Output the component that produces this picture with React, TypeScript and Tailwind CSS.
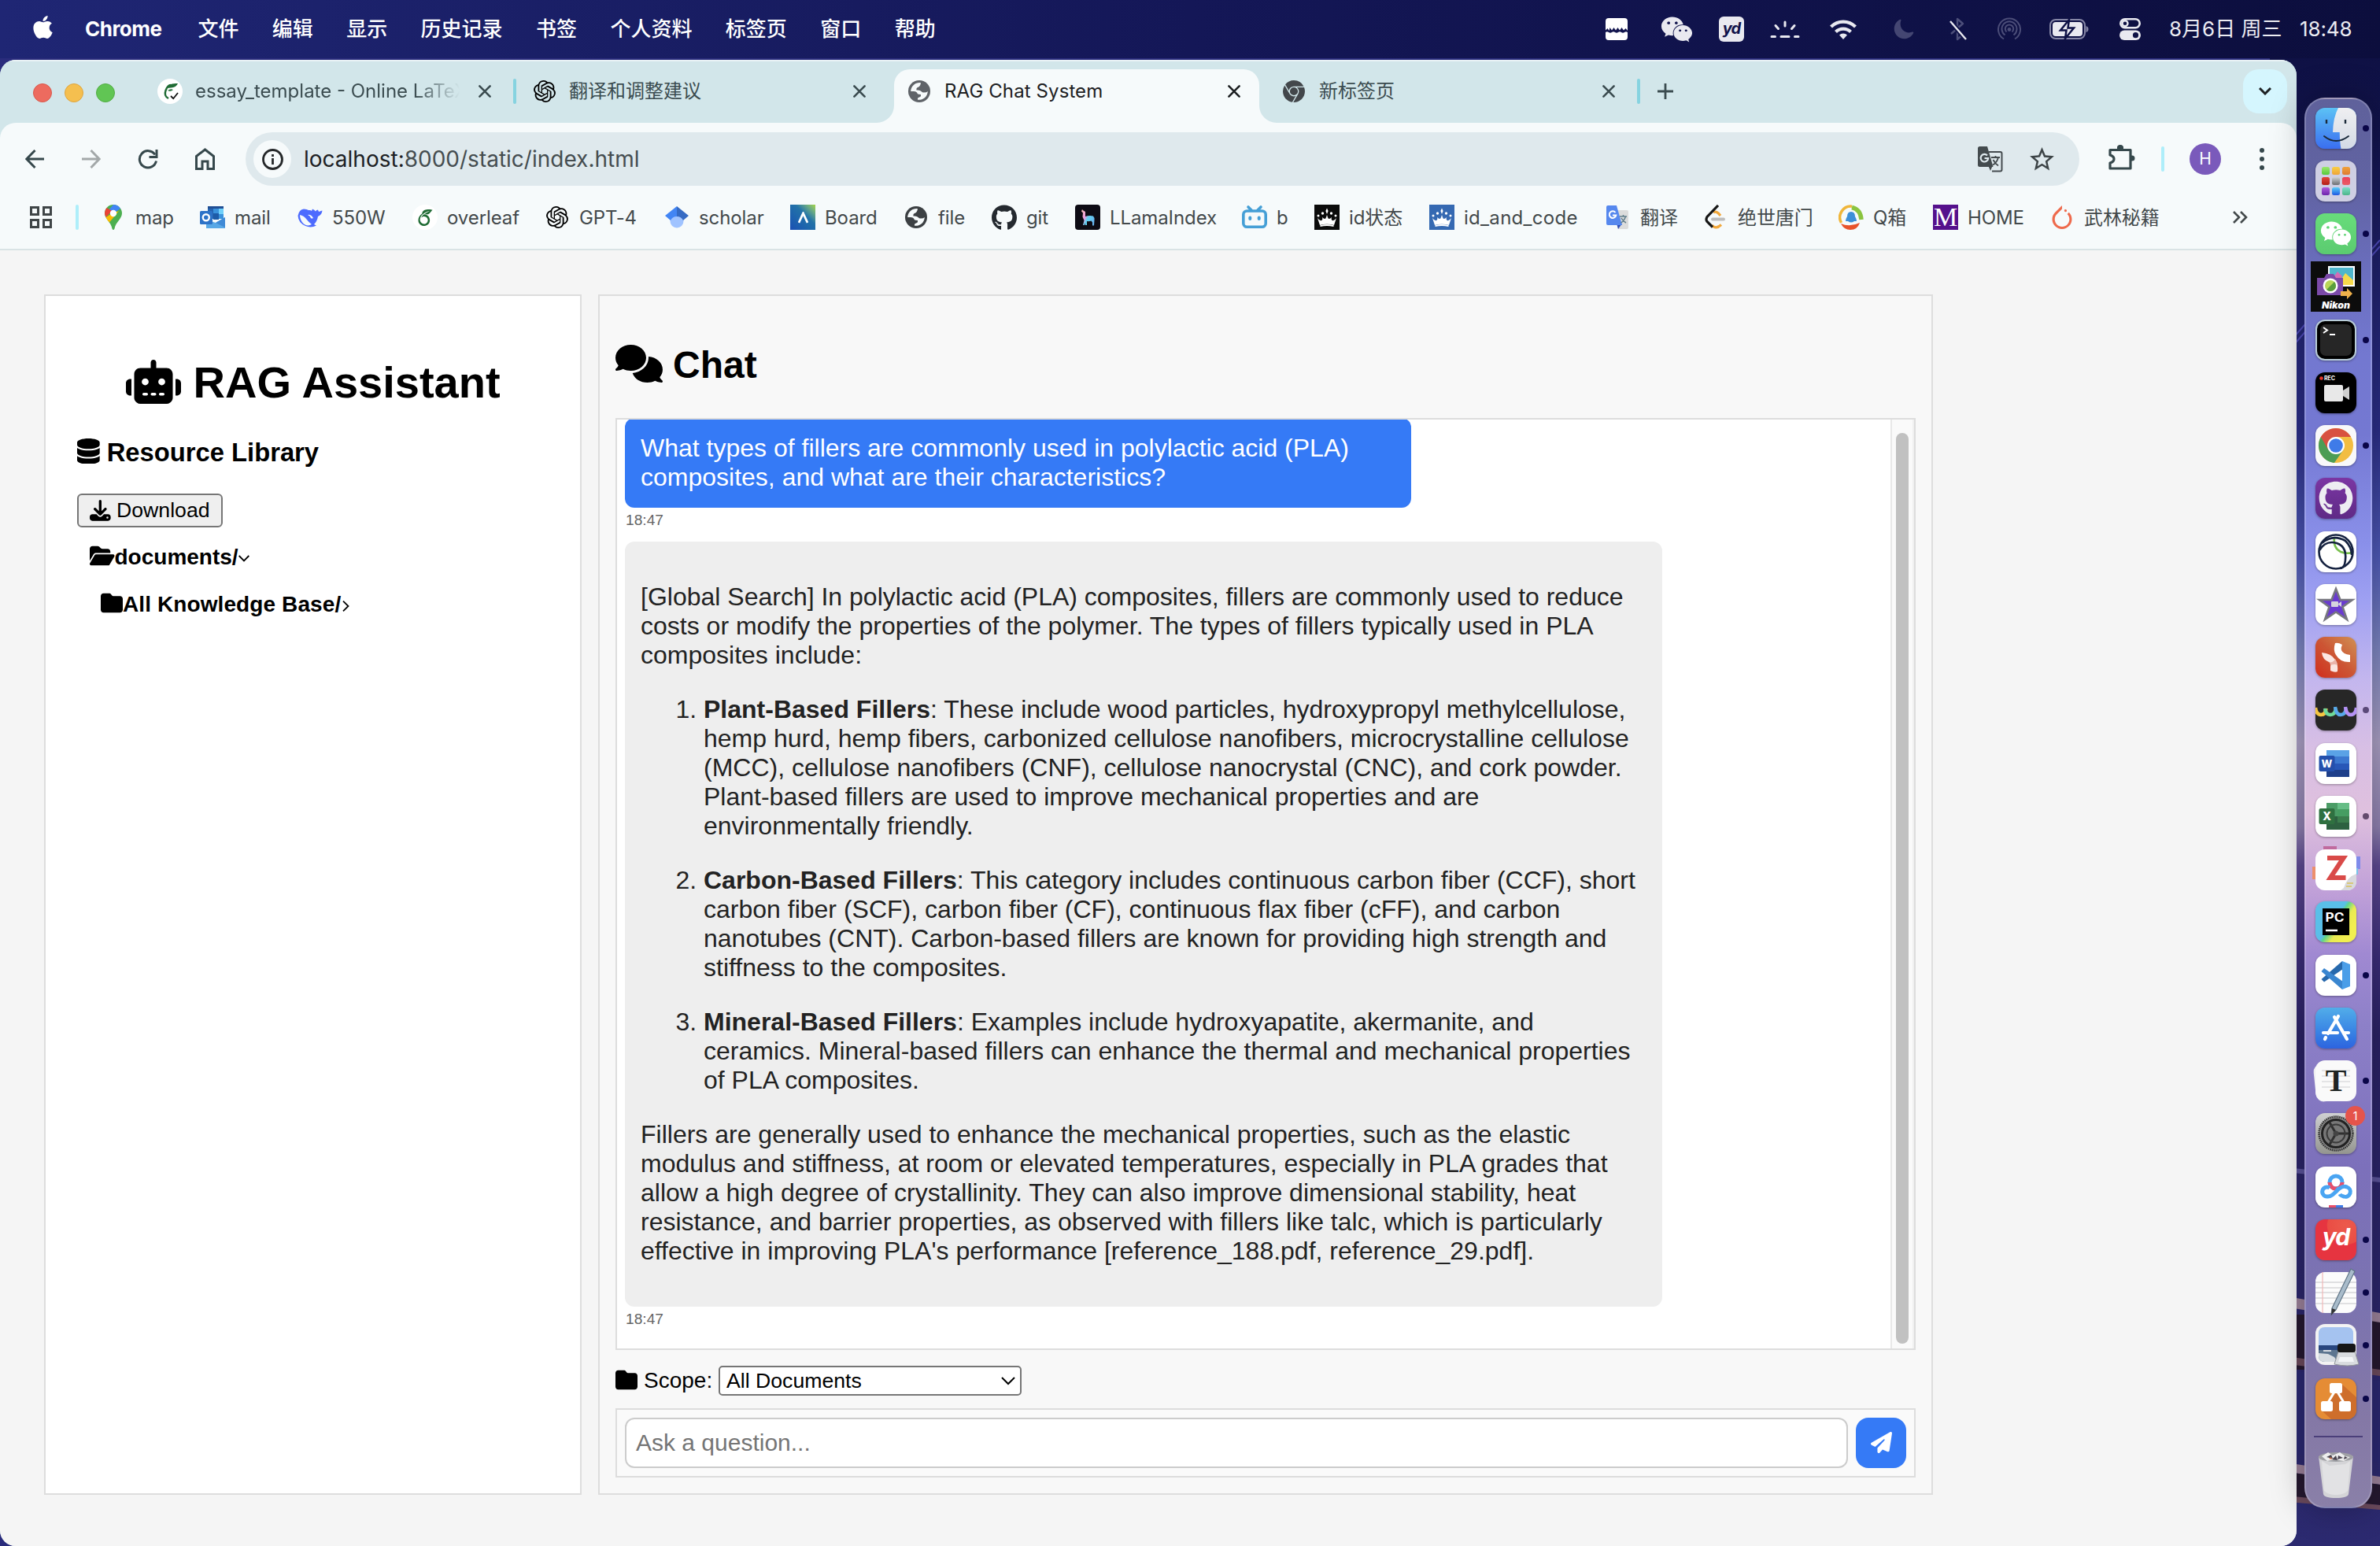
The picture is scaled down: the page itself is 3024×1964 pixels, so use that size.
import React from "react";
import { FaRobot, FaDatabase, FaDownload, FaFolder, FaFolderOpen, FaComments, FaPaperPlane } from "react-icons/fa6";
import { FaApple, FaWeixin, FaGithub } from "react-icons/fa";
import { MdStarOutline } from "react-icons/md";
import { SiOpenai, SiOverleaf, SiPytorch, SiGooglechrome } from "react-icons/si";
import { IoMoon } from "react-icons/io5";

type P = { children?: React.ReactNode; className?: string };

const UI = "font-['Inter','Noto_Sans_CJK_SC',sans-serif]";
const PAGE = "font-['Liberation_Sans',Arial,sans-serif]";

/* ---------- menu bar ---------- */

function MenuBar() {
  return (
    <header className={`${UI} flex h-[74px] w-full shrink-0 items-center bg-linear-to-r from-[#1f2674] via-[#141757] to-[#0c0e3d] text-[26px] text-white`}>
      <FaApple className="ml-[38px] size-[33px] shrink-0 -translate-y-[3px]" />
      <nav className="-mt-[2px] ml-[37px] flex items-center gap-[42.400px] whitespace-nowrap font-medium">
        <span className="w-[101px] font-bold tracking-[-0.5px]">Chrome</span>
        <span>文件</span>
        <span>编辑</span>
        <span>显示</span>
        <span>历史记录</span>
        <span>书签</span>
        <span>个人资料</span>
        <span>标签页</span>
        <span>窗口</span>
        <span>帮助</span>
      </nav>
      <div className="ml-auto flex w-[984px] items-center whitespace-nowrap">
        <svg className="h-[28px] w-[28px] shrink-0" viewBox="0 0 28 28" fill="#fff">
          <path d="M4 0h20q4 0 4 4v12l-2.500-3-2.500 2.500-2.500-3.500-2.500 3.500-2.500-3.500-2.500 3.500-2.500-3.500-2.500 3.500-2.500-3.500L4.500 16 2.500 13 0 15.500V4q0-4 4-4zM0 18q2-1.500 4 0t4 0 4 0 4 0 4 0 4 0 4 0v6q0 4-4 4H4q-4 0-4-4z" />
        </svg>
        <FaWeixin className="ml-[42px] h-[41px] w-[41px] shrink-0 text-[#e9e9f0]" />
        <span className="ml-[33px] flex h-[32px] w-[32px] shrink-0 items-center justify-center rounded-[6px] bg-[#e9e9f0] pb-[3px] text-[20px] font-bold italic tracking-[-1px] text-[#10124a]">yd</span>
        <svg className="ml-[33px] h-[24px] w-[38px] shrink-0" viewBox="0 0 38 24" fill="none" stroke="#e9e9f0" strokeWidth="3" strokeLinecap="round">
          <path d="M19 3v5M7 7.500l3.500 4M31 7.500l-3.500 4M2 21.500h4.500M14 21.500h10M31.500 21.500H36" />
        </svg>
        <svg className="ml-[38px] h-[26px] w-[34px] shrink-0" viewBox="0 0 34 26" fill="none" stroke="#e9e9f0" strokeWidth="4.200">
          <path d="M1.500 10a22 22 0 0 1 31 0M7.500 16.500a13.500 13.500 0 0 1 19 0" />
          <path d="M17 26l-5-5.500a7.500 7.500 0 0 1 10 0z" fill="#e9e9f0" stroke="none" />
        </svg>
        <IoMoon className="ml-[46px] h-[30px] w-[28px] shrink-0 text-[#444672]" />
        <svg className="ml-[43px] h-[30px] w-[24px] shrink-0" viewBox="0 0 24 30" fill="none" strokeWidth="2.4" strokeLinejoin="round">
          <path d="M3 21l15-13-7-6v26l7-6-8-8" stroke="#4d4f7a" />
          <path d="M2 5l20 23" stroke="#0f1146" strokeWidth="6" />
          <path d="M2 5l20 23" stroke="#e9e9f0" strokeWidth="2.400" />
        </svg>
        <svg className="ml-[38px] h-[30px] w-[30px] shrink-0" viewBox="0 0 30 30" fill="none" stroke="#4b4d78" strokeWidth="2">
          <path d="M8 27.500a14 14 0 1 1 14 0M9.500 22.500a9.500 9.500 0 1 1 11 0M11.500 18.500a5.200 5.200 0 1 1 7 0" />
          <circle cx="15" cy="15.500" r="2.400" fill="#4b4d78" stroke="none" />
        </svg>
        <svg className="ml-[36px] h-[26px] w-[50px] shrink-0" viewBox="0 0 50 26">
          <rect x="1" y="1" width="44" height="24" rx="7" fill="none" stroke="#8586a6" strokeWidth="2" />
          <rect x="4" y="4" width="38" height="18" rx="4" fill="#e9e9f0" />
          <path d="M46.500 9q3 1 3 4t-3 4z" fill="#8586a6" />
          <path d="M25 1L14 14.500h7.500L20 25l11-13.500h-7.500z" fill="#e9e9f0" stroke="#0e1145" strokeWidth="2.500" />
        </svg>
        <svg className="ml-[39px] h-[28px] w-[27px] shrink-0" viewBox="0 0 27 28">
          <rect x="1.300" y="1.300" width="24.400" height="11" rx="5.500" fill="none" stroke="#e9e9f0" strokeWidth="2.600" />
          <circle cx="7" cy="6.800" r="3.500" fill="none" stroke="#e9e9f0" strokeWidth="2.400" />
          <rect x="0" y="15.500" width="27" height="12.500" rx="6.200" fill="#e9e9f0" />
          <circle cx="20.500" cy="21.700" r="3.600" fill="#0e1145" />
        </svg>
        <span className="-mt-[2px] ml-[36px] w-[166px] text-[#ececf2]">8月6日 周三</span>
        <span className="-mt-[2px] tracking-[-0.1px] text-[#ececf2]">18:48</span>
      </div>
    </header>
  );
}

/* ---------- browser chrome ---------- */

function Cross({ className = "" }: P) {
  return (
    <svg className={`h-[16px] w-[16px] shrink-0 ${className}`} viewBox="0 0 16 16" stroke="currentColor" strokeWidth="2.600" strokeLinecap="round" fill="none">
      <path d="M1.400 1.400l13.200 13.200M14.600 1.400L1.400 14.600" />
    </svg>
  );
}

function Globe({ className = "" }: P) {
  return (
    <svg className={`size-[28px] shrink-0 ${className}`} viewBox="0 0 28 28">
      <circle cx="14" cy="14" r="14" fill="currentColor" />
      <path d="M16 3.200Q15.500 8 12 9q-2 .5-1.500 3.500Q15 12 16.500 14q1.500 1.800 3.500 1.600 3.500 0 4.800-1.600A11 11 0 0 1 12 24.700q-.5-2.700 2-3.200 2.500-.5 2-3.500-4.500.2-5-2.500Q10 13.800 6.500 14H3.200A11 11 0 0 1 16 3.200z" fill="#f6fafb" />
    </svg>
  );
}

function TabStrip() {
  return (
    <div className="flex h-[80px] shrink-0 items-start border-t-2 border-[#e9f2f5] bg-[#d2e6ea] text-[24px] text-[#3b4c50]">
      <div className="flex h-[78px] w-[200px] shrink-0 items-center gap-[16px] pl-[42px] pt-[2px]">
        <i className="size-[24px] rounded-full border border-[#d9574b] bg-[#ed6b5f]" />
        <i className="size-[24px] rounded-full border border-[#dfa53d] bg-[#f5bf4f]" />
        <i className="size-[24px] rounded-full border border-[#52ad43] bg-[#61c554]" />
      </div>
      <div className="flex h-[76px] w-[452px] shrink-0 items-center">
        <svg viewBox="0 0 32 32" className="size-[32px] shrink-0" fill="none">
          <circle cx="16" cy="16" r="16" fill="#fff" />
          <path d="M14 25Q8 22 10.500 15T17 8" stroke="#1f6b34" strokeWidth="2.400" />
          <path d="M12 12q2-7 14-6-2 5-9 5.500T12 12zM13 15q4-3 7-1-3 3-7 1z" fill="#1f6b34" />
          <path d="M17 22l3.200 3.200L26 18" stroke="#111" strokeWidth="1.800" />
        </svg>
        <span className="ml-[16px] w-[336px] shrink-0 overflow-hidden whitespace-nowrap [mask-image:linear-gradient(90deg,#000_83%,transparent)]">essay_template - Online LaTeX</span>
        <Cross className="ml-[24px]" />
      </div>
      <div className="flex h-[76px] w-[484px] shrink-0 items-center">
        <i className="h-[32px] w-[4px] rounded-full bg-[#86d3e0]" />
        <SiOpenai className="ml-[22px] size-[28px] shrink-0 text-black" />
        <span className="ml-[17px] w-[361px] shrink-0">翻译和调整建议</span>
        <Cross />
      </div>
      <div className="relative mt-[10px] flex h-[68px] w-[464px] shrink-0 items-center rounded-t-[20px] bg-[#f6fafb] pb-[12px] text-[#1d2022]">
        <svg className="absolute -left-[22px] bottom-0 size-[22px]" viewBox="0 0 20 20" fill="#f6fafb">
          <path d="M20 0v20H0A20 20 0 0 0 20 0z" />
        </svg>
        <svg className="absolute -right-[22px] bottom-0 size-[22px]" viewBox="0 0 20 20" fill="#f6fafb">
          <path d="M0 0v20h20A20 20 0 0 1 0 0z" />
        </svg>
        <Globe className="ml-[18px] text-[#5f6368]" />
        <span className="ml-[18px] w-[360px] shrink-0 tracking-[0.1px]">RAG Chat System</span>
        <Cross />
      </div>
      <div className="flex h-[76px] shrink-0 items-center">
        <SiGooglechrome className="ml-[30px] size-[28px] shrink-0 text-[#43474b]" />
        <span className="ml-[18px] w-[360px] shrink-0">新标签页</span>
        <Cross />
        <i className="ml-[28px] h-[32px] w-[4px] rounded-full bg-[#86d3e0]" />
        <svg className="ml-[22px] size-[20px]" viewBox="0 0 20 20" stroke="currentColor" strokeWidth="2.800">
          <path d="M10 0v20M0 10h20" />
        </svg>
      </div>
      <span className="ml-auto mr-[12px] mt-[10px] flex size-[56px] items-center justify-center rounded-[20px] bg-[#d5f6fe]">
        <svg className="h-[10px] w-[16px]" viewBox="0 0 16 10" fill="none" stroke="#1d2022" strokeWidth="3">
          <path d="M1 1l7 7 7-7" />
        </svg>
      </span>
    </div>
  );
}

function Toolbar() {
  return (
    <div className="flex h-[92px] shrink-0 items-center rounded-t-[20px] bg-[#f6fafb] text-[#36484c]">
      <svg className="ml-[32px] size-[24px] shrink-0" viewBox="0 0 24 24" fill="none" stroke="currentColor" strokeWidth="3">
        <path d="M24 12H2M12.500 1L1.800 12l10.700 11" />
      </svg>
      <svg className="ml-[48px] size-[24px] shrink-0 text-[#a3a8a9]" viewBox="0 0 24 24" fill="none" stroke="currentColor" strokeWidth="3">
        <path d="M0 12h22M11.500 1l10.700 11-10.700 11" />
      </svg>
      <svg className="ml-[47px] size-[26px] shrink-0" viewBox="0 0 26 26" fill="none" stroke="currentColor" strokeWidth="3">
        <path d="M23.500 15.500A10.700 10.700 0 1 1 22 7.500" />
        <path d="M24 1v9.500h-9.500" />
      </svg>
      <svg className="ml-[47px] h-[28px] w-[25px] shrink-0" viewBox="0 0 25 28" fill="none" stroke="currentColor" strokeWidth="3">
        <path d="M1.500 10.500L12.500 2l11 8.500v16H16V17H9v9.500H1.500z" />
      </svg>
      <div className="ml-[39px] flex h-[68px] w-[2330px] shrink-0 items-center rounded-full bg-[#dfe9ed]">
        <span className="ml-[10px] flex size-[48px] shrink-0 items-center justify-center rounded-full bg-[#f6fafb]">
          <svg className="size-[27px]" viewBox="0 0 27 27" fill="none" stroke="#25282a" strokeWidth="2.800">
            <circle cx="13.500" cy="13.500" r="12" />
            <path d="M13.500 12v8M13.500 7v3" />
          </svg>
        </span>
        <span className="ml-[16px] whitespace-nowrap text-[28px] text-[#454d50]"><span className="text-[#1d2124]">localhost:</span>8000/static/index.html</span>
        <svg className="ml-auto h-[33px] w-[32px] shrink-0" viewBox="0 0 32 33" fill="none">
          <path d="M14 7h14.500q2 0 2 2v20.500q0 2-2 2H18" stroke="#444b4e" strokeWidth="2" />
          <path d="M2.500 0H12l7.500 26H2.500Q0 26 0 23.500v-21Q0 0 2.500 0zM13 24h6l-3 7z" fill="#444b4e" />
          <path d="M12 11.500a4.800 4.800 0 1 0 1.200 3.500H8.500" stroke="#dfe9ed" strokeWidth="2.200" />
          <path d="M17 14h11M22.500 12v2M26 14q-2 7-7 9.500M19.500 17q2.500 5 6.500 7.500" stroke="#444b4e" strokeWidth="1.800" />
        </svg>
        <MdStarOutline className="ml-[31px] mr-[29px] size-[37px] shrink-0 text-[#3d4447]" />
      </div>
      <svg className="ml-[37px] h-[34px] w-[34px] shrink-0 -translate-y-[2px]" viewBox="0 0 34 34" fill="none" stroke="currentColor" strokeWidth="3.200" strokeLinejoin="round">
        <path d="M2 7.500h26V31H2v-7q5-1.500 5-5t-5-5z" />
        <path d="M11 7V5.500a4 4 0 0 1 8 0V7zM29 14.500h1a3.500 3.500 0 0 1 0 7h-1z" fill="currentColor" stroke="none" />
        <path d="M11 7V5a4 4 0 0 1 8 0v2z" fill="currentColor" stroke="none" />
      </svg>
      <i className="ml-[33px] h-[32px] w-[4px] shrink-0 rounded-full bg-[#aeeefa]" />
      <span className="ml-[32px] flex size-[40px] shrink-0 items-center justify-center rounded-full bg-[#7a5abb] text-[21px] text-white">H</span>
      <svg className="ml-[48px] h-[30px] w-[8px] shrink-0" viewBox="0 0 8 30" fill="currentColor">
        <circle cx="4" cy="4" r="3" /><circle cx="4" cy="15" r="3" /><circle cx="4" cy="26" r="3" />
      </svg>
    </div>
  );
}

function Crown({ bg }: { bg: string }) {
  return (
    <svg viewBox="0 0 32 32" className="size-[32px]">
      <rect width="32" height="32" fill={bg} />
      <g fill="#fff">
        <path d="M4 17q3 4 5 3 2-1 1-4 4 4 5 0l1-3 1 3q1 4 5 0-1 3 1 4 2 1 5-3l-3 9q-9-2.500-18 0z" />
        <path d="M7.500 28q8.500-2 17 0v-2q-8.500-2-17 0z" />
        <path d="M16 4.500l1.600 3.500L16 12l-1.600-4z" />
        <circle cx="10.500" cy="11" r="1.700" /><circle cx="21.500" cy="11" r="1.700" /><circle cx="5" cy="14" r="1.500" /><circle cx="27" cy="14" r="1.500" />
      </g>
    </svg>
  );
}

function Mark({ className, icon, children }: { className: string; icon: React.ReactNode; children: React.ReactNode }) {
  return (
    <span className={`flex shrink-0 items-center gap-[12px] whitespace-nowrap ${className}`}>
      <span className="flex size-[32px] shrink-0 items-center justify-center">{icon}</span>
      <span className="translate-y-[1px]">{children}</span>
    </span>
  );
}

function Bookmarks() {
  return (
    <div className="flex h-[70px] shrink-0 items-center border-b-2 border-[#d9e3e5] bg-[#f6fafb] pb-[12px] text-[24px] tracking-[-0.1px] text-[#43494b]">
      <svg className="ml-[38px] size-[28px] shrink-0" viewBox="0 0 28 28" fill="none" stroke="#3f4547" strokeWidth="3">
        <path d="M1.500 1.500h9v9h-9zM17.500 1.500h9v9h-9zM1.500 17.500h9v9h-9zM17.500 17.500h9v9h-9z" />
      </svg>
      <i className="ml-[30px] h-[32px] w-[4px] shrink-0 rounded-full bg-[#aeeefa]" />
      <Mark className="ml-[28px] w-[126px]" icon={
        <svg viewBox="0 0 22 32" className="h-[32px] w-[22px]">
          <path d="M11 0a11 11 0 0 1 11 11c0 7-8 11-9.500 19.500q-1.500 3-3 0C8 22 0 18 0 11A11 11 0 0 1 11 0z" fill="#4caf50" />
          <path d="M11 0L4 8l7 3 9-6Q17 0 11 0z" fill="#4285f4" />
          <path d="M2.500 4A11 11 0 0 0 1.500 16l8-8z" fill="#ea4335" />
          <path d="M1.500 16q2 4 4.500 6.500L18 8 8 12z" fill="#fbbc04" />
          <circle cx="11" cy="11" r="4.200" fill="#fff" />
        </svg>}>map</Mark>
      <Mark className="w-[124px]" icon={
        <svg viewBox="0 0 32 32" className="size-[32px]">
          <path d="M10 2h20v5H10z" fill="#1f4e94" /><path d="M10 5h7v13h-7z" fill="#2563b0" /><path d="M17 5h7v9h-7z" fill="#3a92dc" /><path d="M24 5h6v9h-6z" fill="#6fd0fa" /><path d="M17 11h7v8h-7z" fill="#1d5ba8" /><path d="M24 12h6v6h-6z" fill="#3a92dc" />
          <path d="M8 19l12 4 12-7v14H8z" fill="#58a8e6" /><path d="M20 23l12 6V16z" fill="#3f8ad6" />
          <rect y="8" width="16" height="17" rx="1.500" fill="#2c72c7" />
          <circle cx="7.800" cy="16.200" r="4" fill="none" stroke="#fff" strokeWidth="2.400" />
        </svg>}>mail</Mark>
      <Mark className="w-[146px]" icon={
        <svg viewBox="0 0 32 26" className="h-[26px] w-[32px]">
          <path d="M19 2.500q2.500 1 4 3 1-2 3-2 .5 2 1.500 2.500 2-1.500 4-1.500Q31 10 26 12q-1 6-5 10l3 1.500Q17 27 10 24 1 20 .500 11 2 3 8 2.500q4 0 6 1.500 3-.500 4 1z" fill="#4d6bfe" />
          <path d="M3 10q5 1 8 5t7 7q-5 3-10-.500Q3 17 3 10z" fill="#f6fafb" />
          <path d="M13 10q4-1 7 4-2 1-3 0-1-3-4-4z" fill="#f6fafb" />
        </svg>}>550W</Mark>
      <Mark className="w-[168px]" icon={<span className="flex size-[32px] items-center justify-center rounded-full bg-white"><SiOverleaf className="size-[21px] text-[#1f6b34]" /></span>}>overleaf</Mark>
      <Mark className="w-[152px]" icon={<SiOpenai className="size-[28px] text-black" />}>GPT-4</Mark>
      <Mark className="w-[160px]" icon={
        <svg viewBox="0 0 30 28" className="h-[28px] w-[30px]">
          <circle cx="15" cy="19" r="8.500" fill="#a0c3ff" />
          <path d="M15 0L0 12l7 6a9 9 0 0 1 8-5z" fill="#4285f4" /><path d="M15 0l15 12-7 6a9 9 0 0 0-8-5z" fill="#356ac3" />
        </svg>}>scholar</Mark>
      <Mark className="w-[144px]" icon={
        <span className="flex size-[32px] items-center justify-center bg-linear-to-bl from-[#a6d63b] via-[#2372a8] via-40% to-[#1b4fb3]">
          <svg viewBox="0 0 14 16" className="h-[15px] w-[13px]" fill="none" stroke="#fff" strokeWidth="3"><path d="M1 15L7 2l6 13" /></svg>
        </span>}>Board</Mark>
      <Mark className="w-[112px]" icon={<Globe className="text-[#3c4043]" />}>file</Mark>
      <Mark className="w-[106px]" icon={<FaGithub className="size-[33px] text-[#24292f]" />}>git</Mark>
      <Mark className="w-[212px]" icon={
        <svg viewBox="0 0 32 32" className="size-[32px]">
          <defs><linearGradient id="ll" x1="0" y1="0" x2="1" y2=".6"><stop offset="0" stopColor="#f6c3b0" /><stop offset=".4" stopColor="#ee9be0" /><stop offset=".6" stopColor="#62d3f2" /><stop offset="1" stopColor="#69b7f0" /></linearGradient></defs>
          <rect width="32" height="32" rx="4" fill="#0d0b14" />
          <path d="M9 6l1.500 1.500 2.500 1.500v6q5-1.500 10-.500 2 2 1.500 5l-.5 7h-2v-4l-1.500-2q-3 1-5.500.500V26h-2v-3l-1 3h-2l1.500-6-2-4.500.5-5-2-2z" fill="url(#ll)" />
        </svg>}>LLamaIndex</Mark>
      <Mark className="w-[92px]" icon={
        <svg viewBox="0 0 32 32" className="size-[32px]" fill="none" stroke="#459fd6" strokeWidth="3.600" strokeLinecap="round">
          <rect x="1.800" y="8" width="28.400" height="20.200" rx="4.500" /><path d="M8 3l4 4M24 3l-4 4" /><path d="M10.300 16.500v1.500M21.700 16.500v1.500" strokeWidth="4" />
        </svg>}>b</Mark>
      <Mark className="w-[146px]" icon={<Crown bg="#0b0b0b" />}>id状态</Mark>
      <Mark className="w-[224px] tracking-[0.3px]" icon={<Crown bg="#3569b2" />}>id_and_code</Mark>
      <Mark className="w-[124px]" icon={
        <svg viewBox="0 0 32 32" className="size-[32px]">
          <path d="M12 7h15q2 0 2 2v20q0 2-2 2H16z" fill="#dcdcdc" /><path d="M14 24h7l-5 7z" fill="#3050b8" />
          <path d="M3 1h11l7 25H3q-2 0-2-2V3q0-2 2-2z" fill="#5688ee" />
          <path d="M12.500 10a4.300 4.300 0 1 0 .800 3.500H9" stroke="#fff" strokeWidth="2" fill="none" />
          <path d="M18 15h9M22.500 13v2M25.500 15q-2 6-6 8M20 17q2 4 6 6" stroke="#607d8b" strokeWidth="1.500" fill="none" />
        </svg>}>翻译</Mark>
      <Mark className="w-[172px]" icon={
        <svg viewBox="0 0 32 32" className="size-[32px]" fill="none" strokeWidth="3.200">
          <path d="M13 10q4-3 9 4M11 26q5 6 12-.500" stroke="#f2a83c" />
          <path d="M19 1L5 15.500q-2 3.500 0 6l7 7" stroke="#161616" /><path d="M12 18.500h14" stroke="#bdbdbd" strokeWidth="4" strokeLinecap="round" />
        </svg>}>绝世唐门</Mark>
      <Mark className="w-[120px]" icon={
        <svg viewBox="0 0 32 32" className="size-[32px]" fill="none" strokeWidth="4">
          <path d="M3.500 23A14 14 0 0 1 17 2.200" stroke="#f0b63a" strokeWidth="3.500" /><path d="M17 3.500Q28 6 29 19" stroke="#8ac43f" strokeWidth="5.500" /><path d="M3 25q12 5 25-1" stroke="#e8532b" strokeWidth="0" /><path d="M3 24q11 5 24-1-3 9-12 9-8 0-12-8z" fill="#e8532b" />
          <path d="M16 9q5 0 5 6 2 3 2 6h-3q-4 3-8 0H9q0-3 2-6 0-6 5-6z" fill="#3c8fd8" />
        </svg>}>Q箱</Mark>
      <Mark className="w-[148px]" icon={<span className="flex size-[32px] items-center justify-center bg-[#55108c] font-['Liberation_Serif',serif] text-[34px] leading-none text-white">M</span>}>HOME</Mark>
      <Mark className="w-[232px]" icon={<SiPytorch className="size-[30px] text-[#ee6a4c]" />}>武林秘籍</Mark>
      <svg className="h-[16px] w-[20px] shrink-0" viewBox="0 0 20 16" fill="none" stroke="#43494b" strokeWidth="2.600"><path d="M2 1l7 7-7 7M11 1l7 7-7 7" /></svg>
    </div>
  );
}

/* ---------- page ---------- */

function Sidebar() {
  return (
    <aside className="flex h-[1525px] w-[683px] shrink-0 flex-col border-2 border-[#ddd] bg-white pl-[40px] text-black">
      <h1 className="mt-[76px] flex h-[64px] items-center pl-[62px] text-[56px] font-bold leading-[64px]">
        <FaRobot className="h-[56px] w-[70px] shrink-0 translate-y-[1px]" />
        <span className="ml-[15.600px] translate-y-[2px] whitespace-nowrap">RAG Assistant</span>
      </h1>
      <h3 className="mt-[39px] flex h-[38px] items-center text-[32.760px] font-bold leading-[38px]">
        <FaDatabase className="h-[32.760px] w-[28.700px] shrink-0 -translate-y-[1px]" />
        <span className="ml-[9px] translate-y-[1px]">Resource Library</span>
      </h3>
      <button className="mt-[34px] flex h-[43px] w-[185px] items-center rounded-[6px] border-2 border-[#767676] bg-[#efefef] pl-[14px] text-[26.670px] leading-none">
        <FaDownload className="size-[26.670px] shrink-0" />
        <span className="ml-[7.400px]">Download</span>
      </button>
      <div className="mt-[21px] flex h-[32px] items-center pl-[16px] text-[28px] font-bold leading-[32px]">
        <FaFolderOpen className="h-[28px] w-[31.500px] shrink-0 -translate-y-[1px]" />
        <span className="translate-y-[1px]">documents/</span>
        <svg className="mt-[5px] h-[9px] w-[14px]" viewBox="0 0 14 9" fill="none" stroke="#000" strokeWidth="1.800"><path d="M.700 1L7 7.500 13.300 1" /></svg>
      </div>
      <div className="mt-[28px] flex h-[32px] items-center pl-[30px] text-[28px] font-bold leading-[32px]">
        <FaFolder className="size-[28px] shrink-0 -translate-y-[1px]" />
        <span className="translate-y-[1px] whitespace-nowrap tracking-[0.1px]">All Knowledge Base/</span>
        <svg className="ml-[2px] mt-[5px] h-[14px] w-[9px]" viewBox="0 0 9 14" fill="none" stroke="#000" strokeWidth="1.800"><path d="M1 .700L7.500 7 1 13.300" /></svg>
      </div>
    </aside>
  );
}

function Lines({ rows }: { rows: React.ReactNode[] }) {
  return (
    <>
      {rows.map((r, i) => (
        <span key={i} className="block whitespace-nowrap">{r}</span>
      ))}
    </>
  );
}

function Chat() {
  return (
    <main className="ml-[21px] flex h-[1525px] w-[1696px] shrink-0 flex-col border-2 border-[#ddd] bg-[#f8f8f8] px-[20px] text-black">
      <h2 className="mt-[59px] flex h-[56px] items-center text-[48px] font-bold leading-[56px]">
        <FaComments className="h-[48px] w-[60px] shrink-0 -translate-y-[1px]" />
        <span className="ml-[13px] translate-y-[1px]">Chat</span>
      </h2>
      <section className="mt-[40px] flex h-[1184px] w-[1652px] shrink-0 overflow-hidden border-2 border-[#ddd] bg-white">
        <div className="flex h-full flex-1 flex-col items-start pl-[10px] text-[32px] leading-[37px]">
          <div className="-mt-[2px] w-[999px] shrink-0 rounded-[12px] bg-[#357af6] p-[20px] text-white">
            <Lines rows={["What types of fillers are commonly used in polylactic acid (PLA)", "composites, and what are their characteristics?"]} />
          </div>
          <time className="ml-[1px] mt-[5px] h-[38px] shrink-0 text-[19.200px] leading-[22px] text-[#666]">18:47</time>
          <div className="w-[1318px] shrink-0 rounded-[12px] bg-[#eee] px-[20px] py-[52px] text-[#222]">
            <p>
              <Lines rows={[
                "[Global Search] In polylactic acid (PLA) composites, fillers are commonly used to reduce",
                "costs or modify the properties of the polymer. The types of fillers typically used in PLA",
                "composites include:",
              ]} />
            </p>
            <ol className="my-[32px] flex list-decimal flex-col gap-[32px] pl-[80px]">
              <li>
                <Lines rows={[
                  <><b>Plant-Based Fillers</b>: These include wood particles, hydroxypropyl methylcellulose,</>,
                  "hemp hurd, hemp fibers, carbonized cellulose nanofibers, microcrystalline cellulose",
                  "(MCC), cellulose nanofibers (CNF), cellulose nanocrystal (CNC), and cork powder.",
                  "Plant-based fillers are used to improve mechanical properties and are",
                  "environmentally friendly.",
                ]} />
              </li>
              <li>
                <Lines rows={[
                  <><b>Carbon-Based Fillers</b>: This category includes continuous carbon fiber (CCF), short</>,
                  "carbon fiber (SCF), carbon fiber (CF), continuous flax fiber (cFF), and carbon",
                  "nanotubes (CNT). Carbon-based fillers are known for providing high strength and",
                  "stiffness to the composites.",
                ]} />
              </li>
              <li>
                <Lines rows={[
                  <><b>Mineral-Based Fillers</b>: Examples include hydroxyapatite, akermanite, and</>,
                  "ceramics. Mineral-based fillers can enhance the thermal and mechanical properties",
                  "of PLA composites.",
                ]} />
              </li>
            </ol>
            <p>
              <Lines rows={[
                "Fillers are generally used to enhance the mechanical properties, such as the elastic",
                "modulus and stiffness, at room or elevated temperatures, especially in PLA grades that",
                "allow a high degree of crystallinity. They can also improve dimensional stability, heat",
                "resistance, and barrier properties, as observed with fillers like talc, which is particularly",
                "effective in improving PLA's performance [reference_188.pdf, reference_29.pdf].",
              ]} />
            </p>
          </div>
          <time className="ml-[1px] mt-[5px] shrink-0 text-[19.200px] leading-[22px] text-[#666]">18:47</time>
        </div>
        <div className="flex h-full w-[30px] shrink-0 flex-col items-center border-x-2 border-l-[#e8e8e8] border-r-[#f0f0f0] bg-[#fafafa] pt-[17px]">
          <i className="h-[1157px] w-[16px] rounded-full bg-[#c1c1c1]" />
        </div>
      </section>
      <div className="mt-[20px] flex h-[38px] shrink-0 items-center text-[28px]">
        <FaFolder className="size-[28px] shrink-0 -translate-y-[1px]" />
        <span className="ml-[8px] w-[95px]">Scope:</span>
        <span className="flex h-[38px] w-[385px] items-center justify-between rounded-[5px] border-2 border-[#767676] bg-white pl-[8px] pr-[6px] text-[26.670px] leading-none">
          All Documents
          <svg className="h-[11px] w-[18px]" viewBox="0 0 18 11" fill="none" stroke="#000" strokeWidth="2"><path d="M1 1l8 8 8-8" /></svg>
        </span>
      </div>
      <div className="mt-[16px] flex h-[88px] w-[1652px] shrink-0 items-center gap-[10px] border-2 border-[#ddd] bg-[#fafafa] pl-[10px]">
        <div className="flex h-[64px] w-[1554px] items-center rounded-[12px] border-2 border-[#ccc] bg-white pb-[2px] pl-[12px] text-[30px] text-[#757575]">Ask a question...</div>
        <div className="flex size-[64px] items-center justify-center rounded-[16px] bg-[#357af6]">
          <FaPaperPlane className="size-[27px] -translate-y-[1px] text-white" />
        </div>
      </div>
    </main>
  );
}

/* ---------- dock ---------- */

function Tile({ children, className = "" }: P) {
  return <span className={`relative flex size-[52px] shrink-0 items-center justify-center overflow-hidden rounded-[12px] shadow-[0_1px_3px_rgba(0,0,0,0.35)] ${className}`}>{children}</span>;
}

function Slot({ children, dot }: { children: React.ReactNode; dot?: string }) {
  return (
    <div className="relative flex h-[67.250px] w-full shrink-0 items-center pl-[14px]">
      {children}
      {dot ? <i className={`absolute right-[4px] size-[8px] rounded-full ${dot}`} /> : null}
    </div>
  );
}

const DARK = "bg-[#0a0648]";

function Dock() {
  return (
    <div className={`${UI} relative ml-[10px] mt-[48px] flex h-[1792px] w-[86px] flex-col rounded-[26px] border-2 border-white/20 bg-[linear-gradient(180deg,#5f619b_0px,#6163a3_116px,#6b6fc0_226px,#7378d0_326px,#7478d2_426px,#8a90ea_566px,#9ea0f2_636px,#c3b6ee_736px,#d8bfe4_826px,#dfc0de_906px,#c0a0d8_1006px,#a089d2_1086px,#8d80c8_1176px,#7c70bb_1356px,#7b73b0_1526px,#8478a6_1676px,#8a80a8_1792px)] pt-[4px] shadow-[0_0_44px_rgba(0,0,0,0.28)]`}>
      <div className="-ml-[2px] -mt-[1px] flex w-[86px] flex-col">
        <Slot dot={DARK}><Tile>
          <svg viewBox="0 0 52 52" className="size-[52px]">
            <defs>
              <linearGradient id="fa" x1="0" y1="0" x2="0" y2="1"><stop offset="0" stopColor="#5cc2f5" /><stop offset="1" stopColor="#3a6ef0" /></linearGradient>
              <linearGradient id="fb" x1="0" y1="0" x2="0" y2="1"><stop offset="0" stopColor="#efeff1" /><stop offset="1" stopColor="#d3dae5" /></linearGradient>
            </defs>
            <rect width="52" height="52" fill="url(#fa)" />
            <path d="M29 0h23v52H32.500q-1.500-7-1.800-21H22Q22.500 12 29 0z" fill="url(#fb)" />
            <path d="M14 15v5M38 15v5" stroke="#1b2a3a" strokeWidth="2.400" />
            <path d="M11 36q15 12 31 0" fill="none" stroke="#1b2a3a" strokeWidth="2" strokeLinecap="round" />
          </svg></Tile></Slot>
        <Slot><Tile className="bg-[#cfcfe3]">
          <span className="grid grid-cols-3 gap-[3px]">
            <i className="size-[10px] rounded-[2.500px] bg-linear-to-b from-[#9be86b] to-[#55c93b]" /><i className="size-[10px] rounded-[2.500px] bg-linear-to-b from-[#f9cf45] to-[#eea43a]" /><i className="size-[10px] rounded-[2.500px] bg-linear-to-b from-[#f0a23a] to-[#dd7a34]" />
            <i className="size-[10px] rounded-[2.500px] bg-linear-to-b from-[#e2453a] to-[#b31f18]" /><i className="size-[10px] rounded-[2.500px] bg-linear-to-b from-[#cfd2d6] to-[#6c6f74]" /><i className="size-[10px] rounded-[2.500px] bg-linear-to-b from-[#ec3f5c] to-[#e85b66]" />
            <i className="size-[10px] rounded-[2.500px] bg-linear-to-b from-[#b059de] to-[#6d24ab]" /><i className="size-[10px] rounded-[2.500px] bg-linear-to-b from-[#5fcdf8] to-[#2456e0]" /><i className="size-[10px] rounded-[2.500px] bg-linear-to-b from-[#7ce0c8] to-[#4db58a]" />
          </span></Tile></Slot>
        <Slot dot={DARK}><Tile className="bg-linear-to-b from-[#68dd7b] to-[#5bcb70]"><FaWeixin className="size-[40px] text-white" /></Tile></Slot>
        <Slot>
          <svg viewBox="0 0 64 64" className="-ml-[6px] size-[64px] shrink-0">
            <rect width="64" height="64" fill="#0c0c0c" />
            <rect x="23" y="7" width="32" height="24" fill="#4fb6cc" stroke="#fff" strokeWidth="2" />
            <path d="M27 23l7-10 6 6-4 8z" fill="#d66ab5" /><path d="M34 30l10-15 10 9v6z" fill="#f7d94c" />
            <path d="M8 21h9l3-5h9l3 5h9v22H8z" fill="#7b4aa8" />
            <circle cx="25" cy="31" r="9.500" fill="#fff" /><circle cx="25" cy="31" r="7" fill="#b9d65a" /><path d="M30 26a7 7 0 0 1-10 10z" fill="#5a9e3e" />
            <path d="M38 38h8v-4l7 7-7 7v-4h-8z" fill="#efb04a" />
            <text x="14" y="60" fontSize="12" fontWeight="900" fontStyle="italic" fill="#fff" textLength="36" lengthAdjust="spacingAndGlyphs">Nikon</text>
          </svg>
        </Slot>
        <Slot dot={DARK}><Tile className="border-2 border-[#b9cdd8] bg-black">
          <svg viewBox="0 0 48 48" className="size-[48px] shrink-0"><rect x="4" y="4" width="40" height="40" rx="7" fill="#262626" /><path d="M8 8l5 3.500-5 3.500M16 17h7" stroke="#fff" strokeWidth="2" fill="none" /></svg></Tile></Slot>
        <Slot><Tile className="bg-black">
          <svg viewBox="0 0 52 52" className="size-[52px]"><circle cx="7.500" cy="7.500" r="2.300" fill="#e8372c" /><text x="11" y="10" fontSize="7" fontWeight="700" fill="#fff">REC</text><rect x="11" y="16" width="24" height="21" rx="2" fill="#e8e8e8" /><path d="M35 23l8-5v17l-8-5z" fill="#cfcfcf" /></svg></Tile></Slot>
        <Slot dot={DARK}><Tile className="bg-[#f8f8fa]">
          <svg viewBox="0 0 52 52" className="size-[52px]">
            <circle cx="26" cy="26" r="22" fill="#f2bd42" />
            <path d="M26 26L6.900 15a22 22 0 0 0 17 32.900l11.600-16.400z" fill="#4c9d55" />
            <path d="M26 15h19A22 22 0 0 0 6.900 15L16 31z" fill="#d85140" />
            <circle cx="26" cy="26" r="11" fill="#fff" /><circle cx="26" cy="26" r="8.800" fill="#3f7be8" />
          </svg></Tile></Slot>
        <Slot><Tile className="bg-linear-to-b from-[#7b36a3] to-[#5f2a86]"><FaGithub className="size-[44px] text-[#ededf2]" /></Tile></Slot>
        <Slot><Tile className="bg-white">
          <svg viewBox="0 0 52 52" className="size-[52px]" fill="none" strokeWidth="2.600">
            <path d="M24 7q-2 14 8 19 8 3 14 1" stroke="#78bf4c" /><circle cx="26" cy="26" r="21.500" stroke="#14213f" />
            <path d="M5 24q8-13 22-9 15 5 10 27-2 5-6 5M8 15q14-12 30-3 8 8 8 18" stroke="#14213f" />
          </svg></Tile></Slot>
        <Slot><Tile className="bg-white">
          <svg viewBox="0 0 52 52" className="size-[52px]"><path d="M26 6l5.500 14H47L34.500 29 40 45l-14-9.500L12 45l5.500-16L5 20h15.500z" fill="#6a3bd0" stroke="#77777f" strokeWidth="2.600" /><rect x="20" y="22" width="9" height="7" rx="1" fill="#d5d5dd" /><path d="M29 25l4-3v7l-4-3z" fill="#d5d5dd" /></svg></Tile></Slot>
        <Slot><Tile className="bg-linear-to-bl from-[#cf9055] via-[#cc5534] to-[#d02a1c]">
          <svg viewBox="0 0 52 52" className="size-[52px]"><path d="M8 20q1 9 9 12 3 1 2 6v5q6 3 9 1 1-9-3-15-5-8-17-9z" fill="#fbe6e2" /><path d="M25 8q-3 9 1 15 6 10 18 9v-9q-9-1-11-6-1-3 1-7-5-3-9-2z" fill="#fff" /><path d="M18 32q5 1 7-4 3 5 3 8-3-2-9 0z" fill="#eab4aa" /></svg></Tile></Slot>
        <Slot dot="bg-[#5a4878]"><Tile className="bg-[#272727]">
          <svg viewBox="0 0 52 52" className="size-[52px]" fill="none" strokeWidth="4.500">
            <path d="M0 23q1 9 7 9t6.500-8" stroke="#f4c542" /><path d="M12 24q1 8 7 8t7-8" stroke="#6fd99a" /><path d="M25 22q1 10 7 10t7-8" stroke="#58a8ea" /><path d="M38 22q1 10 7 10t7-9" stroke="#b591f5" />
          </svg></Tile></Slot>
        <Slot><Tile className="bg-white">
          <svg viewBox="0 0 52 52" className="size-[52px]"><path d="M14 9h29v9H14z" fill="#5aa2e6" /><path d="M14 17h29v9H14z" fill="#3c78d0" /><path d="M14 26h29v9H14z" fill="#2857b8" /><path d="M14 34h29v9H14z" fill="#1e3f8a" /><rect x="4.500" y="16" width="20" height="20" rx="2" fill="#2450ac" /><text x="14.500" y="31" fontSize="13" fontWeight="800" textAnchor="middle" fill="#fff">W</text></svg></Tile></Slot>
        <Slot dot="bg-[#634a6c]"><Tile className="bg-white">
          <svg viewBox="0 0 52 52" className="size-[52px]"><path d="M14 9h15v17H14z" fill="#4b9c66" /><path d="M28 9h15v9H28z" fill="#66bd86" /><path d="M28 17h15v9H28z" fill="#469d62" /><path d="M14 26h29v17H14z" fill="#2d6140" /><path d="M28 26h15v8H28z" fill="#3b7d4d" /><rect x="4.500" y="16" width="20" height="20" rx="2" fill="#2f7040" /><text x="14.500" y="31" fontSize="14" fontWeight="800" textAnchor="middle" fill="#fff">X</text></svg></Tile></Slot>
        <Slot>
          <svg viewBox="0 0 62 60" className="-ml-[4px] h-[60px] w-[62px] shrink-0">
            <rect x="14" y="1" width="17" height="20" fill="#c06a9e" /><rect x="0" y="27" width="20" height="16" fill="#ec8f6c" /><rect x="40" y="14" width="21" height="16" fill="#7f8bea" /><rect x="40" y="29" width="18" height="8" fill="#78c4ea" />
            <rect x="4" y="5" width="52" height="52" rx="12" fill="#fff" /><path d="M56 36Q44 40 40 54l-4 3h8q12 0 12-12z" fill="#d9d9de" /><path d="M44 48h8M43 52h7" stroke="#d9c25a" strokeWidth="1.500" />
            <path d="M19 16h20.500L23 41h19.500" fill="none" stroke="#d94a48" strokeWidth="6" strokeLinejoin="miter" />
          </svg>
        </Slot>
        <Slot><Tile className="bg-[linear-gradient(125deg,#5abfe8_0%,#5abfe8_45%,#5fd68c_50%,#e9ea52_62%,#f2ef50_80%)]">
          <svg viewBox="0 0 52 52" className="size-[52px]"><rect x="9" y="9" width="34" height="34" fill="#000" /><text x="12.500" y="26" fontSize="15.500" fontWeight="700" fill="#fff" textLength="24" lengthAdjust="spacingAndGlyphs">PC</text><path d="M13 37h15" stroke="#fff" strokeWidth="2.600" /></svg></Tile></Slot>
        <Slot dot={DARK}><Tile className="bg-white">
          <svg viewBox="0 0 52 52" className="size-[52px]"><path d="M34 8L7.500 31l3.500 3.500L35 18z" fill="#2668ac" /><path d="M34 44L7.500 21l3.500-4L35 34z" fill="#3a86d0" /><path d="M34 8l10 4v28l-10 4z" fill="#4b9ee8" /></svg></Tile></Slot>
        <Slot><Tile className="bg-linear-to-b from-[#52ade9] to-[#2d63df]">
          <svg viewBox="0 0 52 52" className="size-[52px]" fill="none" stroke="#fff" strokeWidth="4.200" strokeLinecap="round"><path d="M29 11L16 33M24 12l16 28M10 32h18M37 32h5M13 38l-1 2" /></svg></Tile></Slot>
        <Slot dot={DARK}>
          <svg viewBox="0 0 56 58" className="-ml-[4px] h-[58px] w-[56px] shrink-0"><rect x="3" y="6" width="48" height="48" rx="10" fill="#ededf0" transform="rotate(-6 27 30)" /><rect x="4" y="3" width="52" height="52" rx="12" fill="#fafafa" /><path d="M12 16h36M12 23h36M12 30h36M12 37h36" stroke="#e4e4e6" strokeWidth="2" /><text x="30" y="42" fontFamily="Liberation Serif" fontSize="40" fontWeight="700" textAnchor="middle" fill="#1e2422">T</text></svg>
        </Slot>
        <Slot>
          <Tile className="bg-linear-to-b from-[#cfd0d2] to-[#94958f]">
            <svg viewBox="0 0 52 52" className="size-[52px]" fill="none"><circle cx="26" cy="26" r="21.500" fill="#8d8d8d" stroke="#2f2f2f" strokeWidth="2.500" strokeDasharray="1.500 1" /><circle cx="26" cy="26" r="17.500" fill="#777" stroke="#222" strokeWidth="3" /><path d="M26 26h16M26 26l-8-14M26 26l-8 14" stroke="#303030" strokeWidth="3" /><circle cx="26" cy="26" r="11.500" stroke="#3a3a3a" strokeWidth="2" /><circle cx="26" cy="26" r="3.500" fill="#444" /></svg>
          </Tile>
          <span className="absolute left-[52px] top-[-2px] flex size-[25px] items-center justify-center rounded-full bg-[#e5544b] text-[14px] text-white">1</span>
        </Slot>
        <Slot><Tile className="bg-white">
          <svg viewBox="0 0 52 52" className="size-[52px]" fill="none" strokeWidth="5"><circle cx="26" cy="20" r="8" stroke="#4aa5f2" /><path d="M18 20a8 8 0 0 0 16 0" stroke="#e84f6a" /><path d="M30 27Q21 39 15 38a6 6 0 1 1 3-11M26 32q8-9 14-6a6 6 0 1 1-4 12q-4-1-5-3" stroke="#4aa5f2" /><path d="M17 50.500h9" stroke="#e84f6a" strokeWidth="3" /><path d="M26 50.500h9" stroke="#3d7be8" strokeWidth="3" /></svg></Tile></Slot>
        <Slot dot={DARK}><Tile className="bg-[radial-gradient(circle_at_75%_15%,#ec5a4c_0%,#ea4d44_40%,#e63440_42%)]"><span className="-mt-[6px] text-[30px] font-bold italic tracking-[-1px] text-white">yd</span></Tile></Slot>
        <Slot dot={DARK}>
          <svg viewBox="0 0 52 62" className="h-[62px] w-[52px] shrink-0"><rect y="5" width="52" height="52" rx="12" fill="#fcfcfc" /><path d="M0 18h52M0 25h52M0 31h52M0 38h52M0 45h52" stroke="#c4c4c8" strokeWidth="1.200" /><path d="M9 5v52" stroke="#f0b8b8" strokeWidth="1.200" /><path d="M45 1l5 3-24 49-6 6 1-8z" fill="#a9bccb" stroke="#5f7486" strokeWidth="1.200" /><path d="M26 53l-6 7 1-9z" fill="#333" /></svg>
        </Slot>
        <Slot dot={DARK}>
          <svg viewBox="0 0 56 54" className="h-[54px] w-[56px] shrink-0">
            <rect width="52" height="52" rx="12" fill="#f3f3f3" />
            <path d="M4 12q0-8 8-8h28q8 0 8 8v16H4z" fill="#a5c3f0" /><path d="M4 27h44v6H4z" fill="#28467f" /><path d="M4 33h44v7q0 8-8 8H12q-8 0-8-8z" fill="#5d7690" />
            <path d="M4 37l12 1 8 4 4 6H12q-8 0-8-8zM10 33h10v2H10z" fill="#d7dde2" />
            <path d="M29 35h21l5 16q-14 4-31 0z" fill="#d9dcdf" stroke="#8f9498" /><path d="M31 42h16l2 6H29z" fill="#f3f5f7" /><rect x="28" y="25" width="23" height="11" rx="3" fill="#161616" />
          </svg>
        </Slot>
        <Slot dot={DARK}><Tile className="bg-[#e58c35]">
          <svg viewBox="0 0 52 52" className="size-[52px]"><path d="M33 7l19 17v28H20L8 41l16-20z" fill="#ce6e2b" /><path d="M26 14L14 34M26 14l12 20" stroke="#fff" strokeWidth="3" /><rect x="18" y="6" width="16" height="13" rx="2.500" fill="#fff" /><rect x="7" y="29" width="15" height="13" rx="2.500" fill="#fff" /><rect x="30" y="29" width="15" height="13" rx="2.500" fill="#fff" /></svg></Tile></Slot>
      </div>
      <i className="ml-[10px] mt-[14px] h-[2px] w-[62px] shrink-0 bg-[#4b3f7a]" />
      <svg viewBox="0 0 48 60" className="ml-[14px] mt-[18px] h-[60px] w-[48px] shrink-0">
        <path d="M2 6h44l-6 48q-1 5-16 5T8 54z" fill="#d4d4d7" /><path d="M6 12l10 6 20-2 6-4-3 38q-5 5-15 5T9 50z" fill="#e2e2e4" />
        <ellipse cx="24" cy="7" rx="22" ry="6" fill="#9fa0a4" /><path d="M6 6l8-5 6 4 9-4 7 5 6 1-8 5-12-2-9 2z" fill="#efefef" /><path d="M12 7l6-3 2 5zM27 5l6 3-7 2zM19 10l5-5 2 6zM35 6l4 2-5 2z" fill="#4a4450" /><path d="M15 9l3-2 1 3z" fill="#c96a40" />
      </svg>
    </div>
  );
}

function Wallpaper() {
  return (
    <svg className="absolute right-0 top-0 h-[1964px] w-[140px]" viewBox="0 0 140 1964" preserveAspectRatio="none">
      <defs>
        <linearGradient id="wp" x1="0" y1="0" x2="0" y2="1">
          <stop offset="0" stopColor="#0d0f40" /><stop offset=".08" stopColor="#11134a" /><stop offset=".16" stopColor="#1d1f66" /><stop offset=".28" stopColor="#2b2e86" /><stop offset=".36" stopColor="#4d58b4" />
          <stop offset=".42" stopColor="#7b83bd" /><stop offset=".48" stopColor="#a79cc0" /><stop offset=".535" stopColor="#8d7fae" /><stop offset=".56" stopColor="#5c4890" /><stop offset=".62" stopColor="#3b2d78" /><stop offset=".67" stopColor="#2a2264" /><stop offset="1" stopColor="#2c2a70" />
        </linearGradient>
      </defs>
      <rect width="140" height="1964" fill="url(#wp)" />
      <path d="M140 305L20 440M140 313L20 450" stroke="#4d49b8" strokeWidth="2" />
      <path d="M30 1484l110 12v6L30 1490z" fill="#5a5399" />
      <path d="M0 1670h140v70H0z" fill="#25182f" />
      <path d="M0 1643l140 25v12L0 1657z" fill="#9a8098" />
      <path d="M0 1738l140 16v104L0 1844z" fill="#2a2870" />
      <path d="M0 1720l140 20v8L0 1730z" fill="#6b4a5c" />
      <path d="M0 1855l140 21v10L0 1867z" fill="#9a8098" />
      <path d="M0 1867l140 19v26L0 1900z" fill="#25182f" />
      <path d="M0 1898l140 14v6L0 1906z" fill="#6b4a5c" />
    </svg>
  );
}

export default function App() {
  return (
    <div className="relative flex h-[1964px] w-[3024px] flex-col overflow-hidden bg-[#2a2c7c]">
      <Wallpaper />
      <div className="relative flex flex-col">
        <MenuBar />
        <div className="flex h-[1890px] pt-[2px]">
          <div className={`${UI} flex h-[1888px] w-[2918px] shrink-0 flex-col overflow-hidden rounded-[20px] bg-[#d2e6ea]`}>
            <TabStrip />
            <Toolbar />
            <Bookmarks />
            <div className={`${PAGE} flex flex-1 bg-[#f5f5f5] pl-[56px] pt-[56px]`}>
              <Sidebar />
              <Chat />
            </div>
          </div>
          <Dock />
        </div>
      </div>
    </div>
  );
}
